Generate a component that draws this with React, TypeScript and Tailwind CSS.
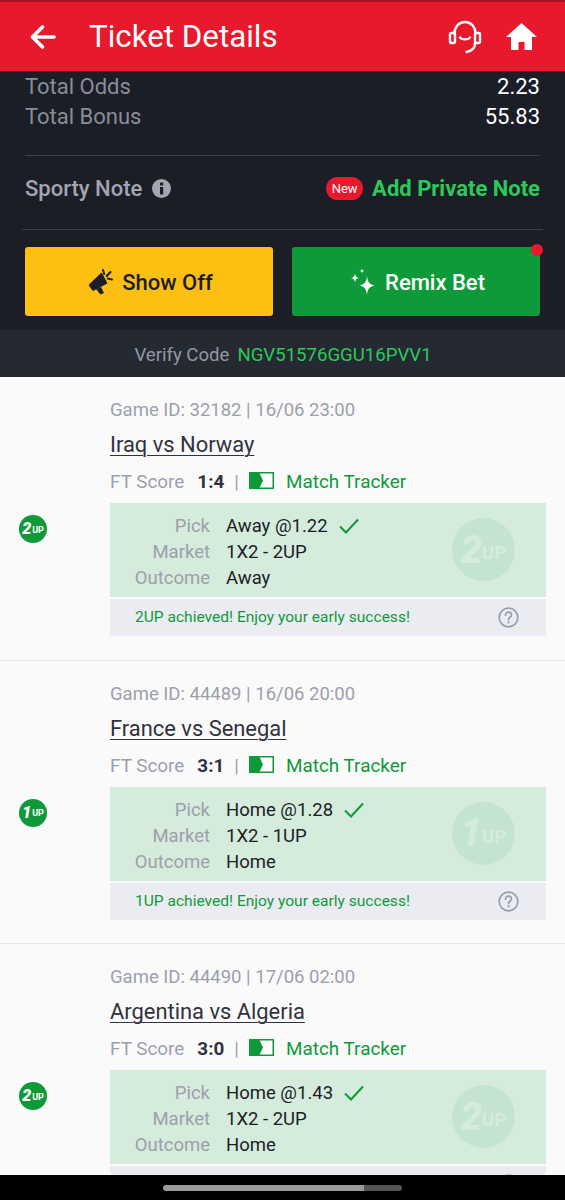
import React from "react";

function Back() {
  return (
    <svg width="30" height="30" viewBox="0 0 30 30" fill="none" stroke="#fff" strokeWidth="3.6" strokeLinecap="round" strokeLinejoin="round">
      <path d="M26 15H5" />
      <path d="M14.500 5 4.500 15l10 10" />
    </svg>
  );
}

function Headset() {
  return (
    <svg width="34" height="34" viewBox="0 0 34 34" fill="none" stroke="#fff" strokeWidth="2.4" strokeLinecap="round" strokeLinejoin="round">
      <path d="M6.500 13.500C6.500 7 11 2 17 2s10.500 5 10.500 11.500" />
      <rect x="2" y="13" width="5" height="10" rx="1.2" />
      <rect x="27" y="13" width="5" height="10" rx="1.2" />
      <path d="M12 17.500c1.500 2.500 8.500 2.500 10 0" />
      <path d="M27 23c0 5-3.500 8-8.500 9" />
    </svg>
  );
}

function Home() {
  return (
    <svg width="31" height="27" viewBox="0 0 31 27" fill="#fff">
      <path d="M15.500 0 0 14h5v13h7.500v-8h6v8H26V14h5z" />
    </svg>
  );
}

function Info() {
  return (
    <svg width="19" height="19" viewBox="0 0 19 19">
      <circle cx="9.500" cy="9.500" r="9.500" fill="#a3a6b1" />
      <rect x="8" y="8" width="3.200" height="7.500" fill="#1b1e27" />
      <rect x="8" y="3.500" width="3.200" height="3" fill="#1b1e27" />
    </svg>
  );
}

function Megaphone() {
  return (
    <svg width="25" height="26" viewBox="0 0 25 26">
      <path d="M1.500 16 13.500 4.500 18.500 14 5 21z" fill="#1b1e27" stroke="#1b1e27" strokeWidth="1.500" strokeLinejoin="round" />
      <path d="M8 20l5-2 3 6-3.500 1.500z" fill="#1b1e27" />
      <path d="M15 1l1.200 4M22.500 3l-3.800 4M24 10.500l-4.200-.9" fill="none" stroke="#1b1e27" strokeWidth="2" strokeLinecap="round" />
    </svg>
  );
}

function Sparkles() {
  return (
    <svg width="25" height="27" viewBox="0 0 25 27" fill="#fff">
      <path d="M17 8c.6 6 2 8.300 7.500 9.500-5.500 1.200-6.900 3.500-7.500 9.500-.6-6-2-8.300-7.500-9.500C15 16.300 16.400 14 17 8z" />
      <path d="M5 5.500c.4 2.800 1.200 3.900 4 4.500-2.800.6-3.600 1.700-4 4.500-.4-2.800-1.200-3.900-4-4.500 2.800-.6 3.600-1.700 4-4.500z" />
      <path d="M12 .500c.2 1.500.7 2.100 2.500 2.500-1.800.4-2.300 1-2.500 2.500-.2-1.500-.7-2.100-2.500-2.500C11.300 2.600 11.800 2 12 .500z" />
    </svg>
  );
}

function TrackerIcon() {
  return (
    <svg width="25" height="17" viewBox="0 0 25 17">
      <rect x="0.750" y="0.750" width="23.500" height="15.500" fill="#fff" stroke="#0f9a39" strokeWidth="1.500" />
      <path d="M1 1h9.500l3.500 7.500-3.500 7.500H1z" fill="#0f9a39" />
    </svg>
  );
}

function Check() {
  return (
    <svg width="20" height="16" viewBox="0 0 20 16" fill="none" stroke="#0f9a39" strokeWidth="2">
      <path d="M1 8.500 7 14.500 19 1.500" />
    </svg>
  );
}

function Help() {
  return (
    <svg width="21" height="21" viewBox="0 0 21 21" fill="none" stroke="#9b9ea8" strokeWidth="1.700" strokeLinecap="round">
      <circle cx="10.500" cy="10.500" r="9.300" />
      <path d="M7.500 8.200c0-1.800 1.300-3 3-3s3 1.100 3 2.700c0 2.300-3 2.400-3 4.700" />
      <path d="M10.500 15.200v.4" strokeWidth="2" />
    </svg>
  );
}

function UpBadge({ n }: { n: string }) {
  return (
    <div className="flex h-[28px] w-[28px] items-center justify-center rounded-full bg-[#0f9a39] text-white">
      <span className="text-[16px] font-black italic leading-none">{n}</span>
      <span className="ml-[1px] mt-[2px] text-[9px] font-bold leading-none">UP</span>
    </div>
  );
}

type Game = {
  id: string;
  when: string;
  title: string;
  score: string;
  pick: string;
  outcome: string;
  up: string;
};

const games: Game[] = [
  { id: "32182", when: "16/06 23:00", title: "Iraq vs Norway", score: "1:4", pick: "Away @1.22", outcome: "Away", up: "2" },
  { id: "44489", when: "16/06 20:00", title: "France vs Senegal", score: "3:1", pick: "Home @1.28", outcome: "Home", up: "1" },
  { id: "44490", when: "17/06 02:00", title: "Argentina vs Algeria", score: "3:0", pick: "Home @1.43", outcome: "Home", up: "2" },
];

function GameRow({ g }: { g: Game }) {
  return (
    <div className="flex h-[283.6px] shrink-0 border-b border-[#e4e5ec]">
      <div className="flex w-[110px] shrink-0 items-start pl-[19px] pt-[138px]">
        <UpBadge n={g.up} />
      </div>
      <div className="w-[436px] pt-[22px]">
        <div className="text-[18.5px] leading-[22px] text-[#9ca0ab]">
          Game ID: {g.id} | {g.when}
        </div>
        <div className="mt-[11px] text-[21.9px] leading-[26px] text-[#30333d] underline decoration-1 underline-offset-[3px]">
          {g.title}
        </div>
        <div className="mt-[12px] flex h-[24px] items-center text-[18.9px] leading-[24px]">
          <span className="text-[#9ca0ab]">FT Score</span>
          <span className="ml-[13px] font-bold text-[#30333d]">{g.score}</span>
          <span className="ml-[10px] text-[#9ca0ab]">|</span>
          <span className="ml-[10px] mb-[3px]"><TrackerIcon /></span>
          <span className="ml-[12px] text-[#0f9a39]">Match Tracker</span>
        </div>
        <div className="relative mt-[9px] h-[94px] bg-[#d5ebdc] pt-[10px] text-[18.5px] leading-[26px]">
          {[
            ["Pick", g.pick],
            ["Market", `1X2 - ${g.up}UP`],
            ["Outcome", g.outcome],
          ].map(([label, value], i) => (
            <div key={label} className="flex">
              <span className="w-[100px] text-right text-[#9ca0ab]">{label}</span>
              <span className="ml-[16px] flex items-center text-[#1b1e27]">
                {value}
                {i === 0 && <span className="ml-[11px]"><Check /></span>}
              </span>
            </div>
          ))}
          <div className="absolute left-[342px] top-[15px] flex h-[63px] w-[63px] items-center justify-center rounded-full bg-[#c5e4d0] text-[#d5ebdc]">
            <span className="text-[38px] font-black italic leading-none">{g.up}</span>
            <span className="mt-[6px] text-[19px] font-bold leading-none">UP</span>
          </div>
        </div>
        <div className="mt-[2px] flex h-[37px] items-center justify-between bg-[#ebecf1] pl-[25px] pr-[27px] text-[15.55px] text-[#0f9a39]">
          <span className="mt-[1px]">{g.up}UP achieved! Enjoy your early success!</span>
          <Help />
        </div>
      </div>
    </div>
  );
}

export default function App() {
  return (
    <div className="relative flex h-[1200px] w-[565px] flex-col overflow-hidden bg-[#fafafb] font-['Roboto',sans-serif]">
      <header className="flex h-[71px] shrink-0 items-center border-t-2 border-[#a81220] bg-[#e8192c] pl-[28px] pr-[28px] text-white">
        <Back />
        <h1 className="ml-[31px] mt-[1px] text-[31.3px] font-normal leading-none">Ticket Details</h1>
        <div className="ml-auto flex items-center gap-[24px]">
          <Headset />
          <Home />
        </div>
      </header>

      <section className="flex h-[259px] shrink-0 flex-col bg-[#1b1e27] px-[25px]">
        <div className="mt-[1px] flex h-[30px] items-center justify-between text-[22px] leading-[30px]">
          <span className="text-[#8a8d98]">Total Odds</span>
          <span className="text-white">2.23</span>
        </div>
        <div className="flex h-[30px] items-center justify-between text-[22px] leading-[30px]">
          <span className="text-[#8a8d98]">Total Bonus</span>
          <span className="text-white">55.83</span>
        </div>
        <div className="mt-[23px] h-px bg-[#3b3e49]" />
        <div className="flex h-[73px] items-center justify-between pb-[8px]">
          <div className="flex items-center">
            <span className="text-[22px] font-medium text-[#a3a6b1]">Sporty Note</span>
            <span className="ml-[10px]"><Info /></span>
          </div>
          <div className="flex items-center">
            <span className="flex h-[23px] w-[37px] items-center justify-center rounded-full bg-[#e8192c] text-[13px] text-white">New</span>
            <span className="ml-[9px] text-[22px] font-bold text-[#2bc95a]">Add Private Note</span>
          </div>
        </div>
        <div className="mx-[-3px] h-px bg-[#3b3e49]" />
        <div className="mt-[17px] flex justify-between">
          <button className="flex h-[69px] w-[248px] items-center justify-center gap-[9px] rounded-[3px] bg-[#fdc012] pl-[3px] text-[22px] font-medium text-[#1b1e27]">
            <Megaphone />
            <span className="mt-[1px]">Show Off</span>
          </button>
          <button className="relative flex h-[69px] w-[248px] items-center justify-center gap-[10px] rounded-[3px] bg-[#0f9a39] pl-[3px] text-[22px] font-medium text-white">
            <Sparkles />
            <span className="mt-[1px]">Remix Bet</span>
            <span className="absolute right-[-3px] top-[-3px] h-[12px] w-[12px] rounded-full bg-[#e8192c]" />
          </button>
        </div>
      </section>

      <div className="flex h-[47px] shrink-0 items-center justify-center bg-[#252932] pl-[1px] pt-[4px] text-[18.6px]">
        <span className="text-[#9498a3]">Verify Code</span>
        <span className="ml-[8px] text-[#2bc95a]">NGV51576GGU16PVV1</span>
      </div>

      <div className="flex flex-col">
        {games.map((g) => (
          <GameRow key={g.id} g={g} />
        ))}
      </div>

      <div className="absolute bottom-0 left-0 right-0 flex h-[25px] items-center justify-center bg-black">
        <div className="relative h-[6px] w-[239px] overflow-hidden rounded-full bg-[#555]">
          <div className="h-full w-[201px] rounded-l-full bg-[#9a9a9a]" />
        </div>
      </div>
    </div>
  );
}
